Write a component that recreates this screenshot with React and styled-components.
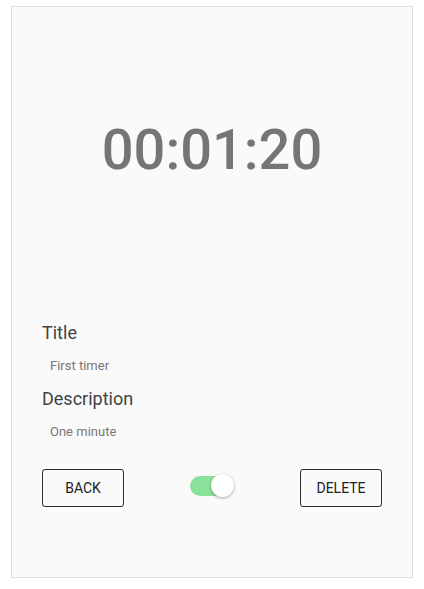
import React, { useState } from 'react';
import styled, { createGlobalStyle } from 'styled-components';

const GlobalStyle = createGlobalStyle`
  body {
    margin: 0;
    background: #ffffff;
    font-family: Roboto, "Liberation Sans", sans-serif;
  }
`;

const Card = styled.div`
  box-sizing: border-box;
  width: 402px;
  height: 572px;
  margin: 6px 11px 0;
  padding: 0 30px;
  background: #fafafa;
  border: 1px solid #dddddd;
`;

const Clock = styled.div`
  margin-top: 108px;
  font-size: 56px;
  line-height: 70px;
  font-weight: 500;
  color: #757575;
  text-align: center;
`;

const Info = styled.div`
  margin-top: 136px;
`;

const Label = styled.div`
  font-size: 18px;
  line-height: 24px;
  color: #424242;
`;

const Value = styled.div`
  margin: 11px 0 11px 8px;
  font-size: 13px;
  line-height: 20px;
  color: #777777;
`;

const Actions = styled.div`
  margin-top: 27px;
  display: flex;
  align-items: center;
  justify-content: space-between;
`;

const Button = styled.button`
  box-sizing: border-box;
  width: 82px;
  height: 38px;
  padding: 0;
  background: transparent;
  border: 1px solid #233030;
  border-radius: 3px;
  font-family: Roboto, "Liberation Sans", sans-serif;
  font-size: 14px;
  color: #212121;
  cursor: pointer;
`;

const Switch = styled.div`
  position: relative;
  width: 44px;
  height: 24px;
  margin-bottom: 5px;
  cursor: pointer;
`;

const Track = styled.div`
  position: absolute;
  left: 0;
  top: 2px;
  width: 40px;
  height: 20px;
  border-radius: 10px;
  background: ${p => (p.$on ? '#8be29a' : '#cccccc')};
`;

const Thumb = styled.div`
  position: absolute;
  top: 0;
  left: ${p => (p.$on ? '21px' : '0')};
  width: 23px;
  height: 23px;
  border-radius: 50%;
  background: #ffffff;
  box-shadow: 0 1px 3px rgba(0, 0, 0, 0.35);
`;

const App = () => {
  const [on, setOn] = useState(true);
  return (
    <>
      <GlobalStyle />
      <Card>
        <Clock>00:01:20</Clock>
        <Info>
          <Label>Title</Label>
          <Value>First timer</Value>
          <Label>Description</Label>
          <Value>One minute</Value>
        </Info>
        <Actions>
          <Button>BACK</Button>
          <Switch onClick={() => setOn(!on)}>
            <Track $on={on} />
            <Thumb $on={on} />
          </Switch>
          <Button>DELETE</Button>
        </Actions>
      </Card>
    </>
  );
};

export default App;
